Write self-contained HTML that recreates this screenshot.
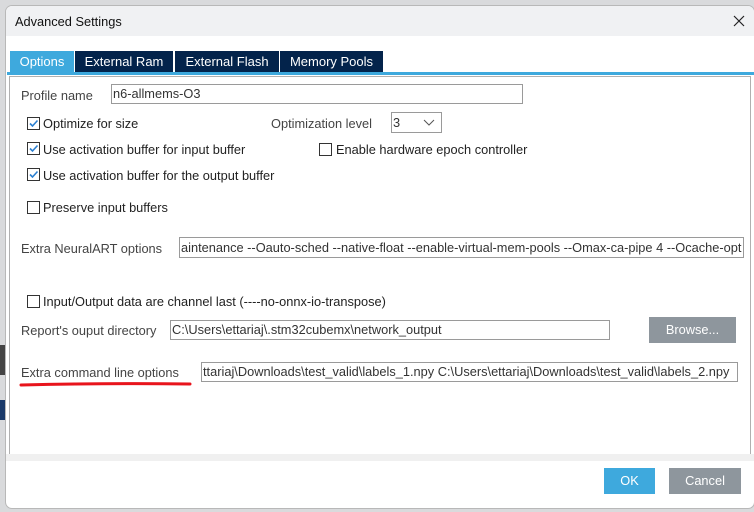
<!DOCTYPE html>
<html><head><style>
body{margin:0;width:754px;height:512px;background:#d9dadc;position:relative;overflow:hidden;font-family:"Liberation Sans",sans-serif;font-size:12.8px;color:#222}
.a{position:absolute;white-space:nowrap}
.dlg{position:absolute;left:5px;top:5px;width:748px;height:502px;background:#fff;border:1px solid #b8b8b8;border-radius:7px;overflow:hidden}
.inp{position:absolute;border:1px solid #9a9a9a;background:#fff;height:18px;line-height:18px;overflow:hidden;padding-left:1px;color:#333;white-space:nowrap}
.cb{position:absolute;width:11px;height:11px;border:1px solid #333;background:#fff}
.lbl{color:#444}
.tab{position:absolute;top:45px;height:21px;line-height:21px;background:#03234b;color:#fff;text-align:center;font-size:13px}
</style></head><body>
<div class="a" style="left:0;top:345px;width:5px;height:30px;background:#444"></div>
<div class="a" style="left:0;top:400px;width:5px;height:20px;background:#1a3a6a"></div>
<div class="dlg">
 <div class="a" style="left:0;top:0;width:748px;height:30px;background:#f0f1f3"></div>
 <div class="a" style="left:9px;top:8px;color:#111">Advanced Settings</div>
 <svg class="a" style="left:727px;top:9px" width="12" height="12"><path d="M1 1L11 11M11 1L1 11" stroke="#222" stroke-width="1.2"/></svg>
 <div class="tab" style="left:4px;width:64px;background:#3ea9dd">Options</div>
 <div class="tab" style="left:69px;width:98px">External Ram</div>
 <div class="tab" style="left:169px;width:104px">External Flash</div>
 <div class="tab" style="left:274px;width:103px">Memory Pools</div>
 <div class="a" style="left:1px;top:66px;width:747px;height:3px;background:#3ea9dd"></div>
 <div class="a" style="left:3px;top:70px;width:740px;height:377px;border:1px solid #b0b0b0"></div>
 <div class="a" style="left:0;top:448px;width:748px;height:7px;background:#f0f0f0"></div>
</div>
<div class="a lbl" style="left:21px;top:88px">Profile name</div>
<div class="inp" style="left:111px;top:84px;width:409px">n6-allmems-O3</div>

<div class="cb" style="left:27px;top:117px"></div><svg class="a" style="left:28px;top:118px" width="11" height="11"><path d="M2 5.5L4.5 8L9.5 2.5" stroke="#2b7fd0" stroke-width="1.6" fill="none"/></svg>
<div class="a" style="left:43px;top:116px">Optimize for size</div>
<div class="a lbl" style="left:271px;top:116px">Optimization level</div>
<div class="inp" style="left:391px;top:112px;width:48px;height:19px;line-height:19px">3</div>
<svg class="a" style="left:423px;top:119px" width="12" height="8"><path d="M1 1L6 6L11 1" stroke="#555" fill="none"/></svg>

<div class="cb" style="left:27px;top:142px"></div><svg class="a" style="left:28px;top:143px" width="11" height="11"><path d="M2 5.5L4.5 8L9.5 2.5" stroke="#2b7fd0" stroke-width="1.6" fill="none"/></svg>
<div class="a" style="left:43px;top:142px">Use activation buffer for input buffer</div>
<div class="cb" style="left:319px;top:143px"></div>
<div class="a" style="left:336px;top:142px">Enable hardware epoch controller</div>

<div class="cb" style="left:27px;top:168px"></div><svg class="a" style="left:28px;top:169px" width="11" height="11"><path d="M2 5.5L4.5 8L9.5 2.5" stroke="#2b7fd0" stroke-width="1.6" fill="none"/></svg>
<div class="a" style="left:43px;top:168px">Use activation buffer for the output buffer</div>

<div class="cb" style="left:27px;top:201px"></div>
<div class="a" style="left:43px;top:200px">Preserve input buffers</div>

<div class="a lbl" style="left:21px;top:241px">Extra NeuralART options</div>
<div class="inp" style="left:179px;top:237px;width:562px;height:19px;line-height:19px">aintenance --Oauto-sched --native-float --enable-virtual-mem-pools --Omax-ca-pipe 4 --Ocache-opt</div>

<div class="cb" style="left:27px;top:295px"></div>
<div class="a" style="left:43px;top:294px">Input/Output data are channel last (----no-onnx-io-transpose)</div>

<div class="a lbl" style="left:21px;top:323px">Report's ouput directory</div>
<div class="inp" style="left:170px;top:320px;width:437px">C:\Users\ettariaj\.stm32cubemx\network_output</div>
<div class="a" style="left:649px;top:317px;width:87px;height:26px;line-height:26px;background:#8e969d;color:#fff;text-align:center">Browse...</div>

<div class="a lbl" style="left:21px;top:365px">Extra command line options</div>
<svg class="a" style="left:18px;top:380px" width="176" height="8"><path d="M3 5Q90 3 172 4" stroke="#e8141c" stroke-width="3" fill="none" stroke-linecap="round"/></svg>
<div class="inp" style="left:201px;top:362px;width:534px">ttariaj\Downloads\test_valid\labels_1.npy C:\Users\ettariaj\Downloads\test_valid\labels_2.npy</div>

<div class="a" style="left:604px;top:468px;width:51px;height:26px;line-height:26px;background:#3ea9dd;color:#fff;text-align:center">OK</div>
<div class="a" style="left:669px;top:468px;width:72px;height:26px;line-height:26px;background:#8e969d;color:#fff;text-align:center">Cancel</div>
</body></html>
